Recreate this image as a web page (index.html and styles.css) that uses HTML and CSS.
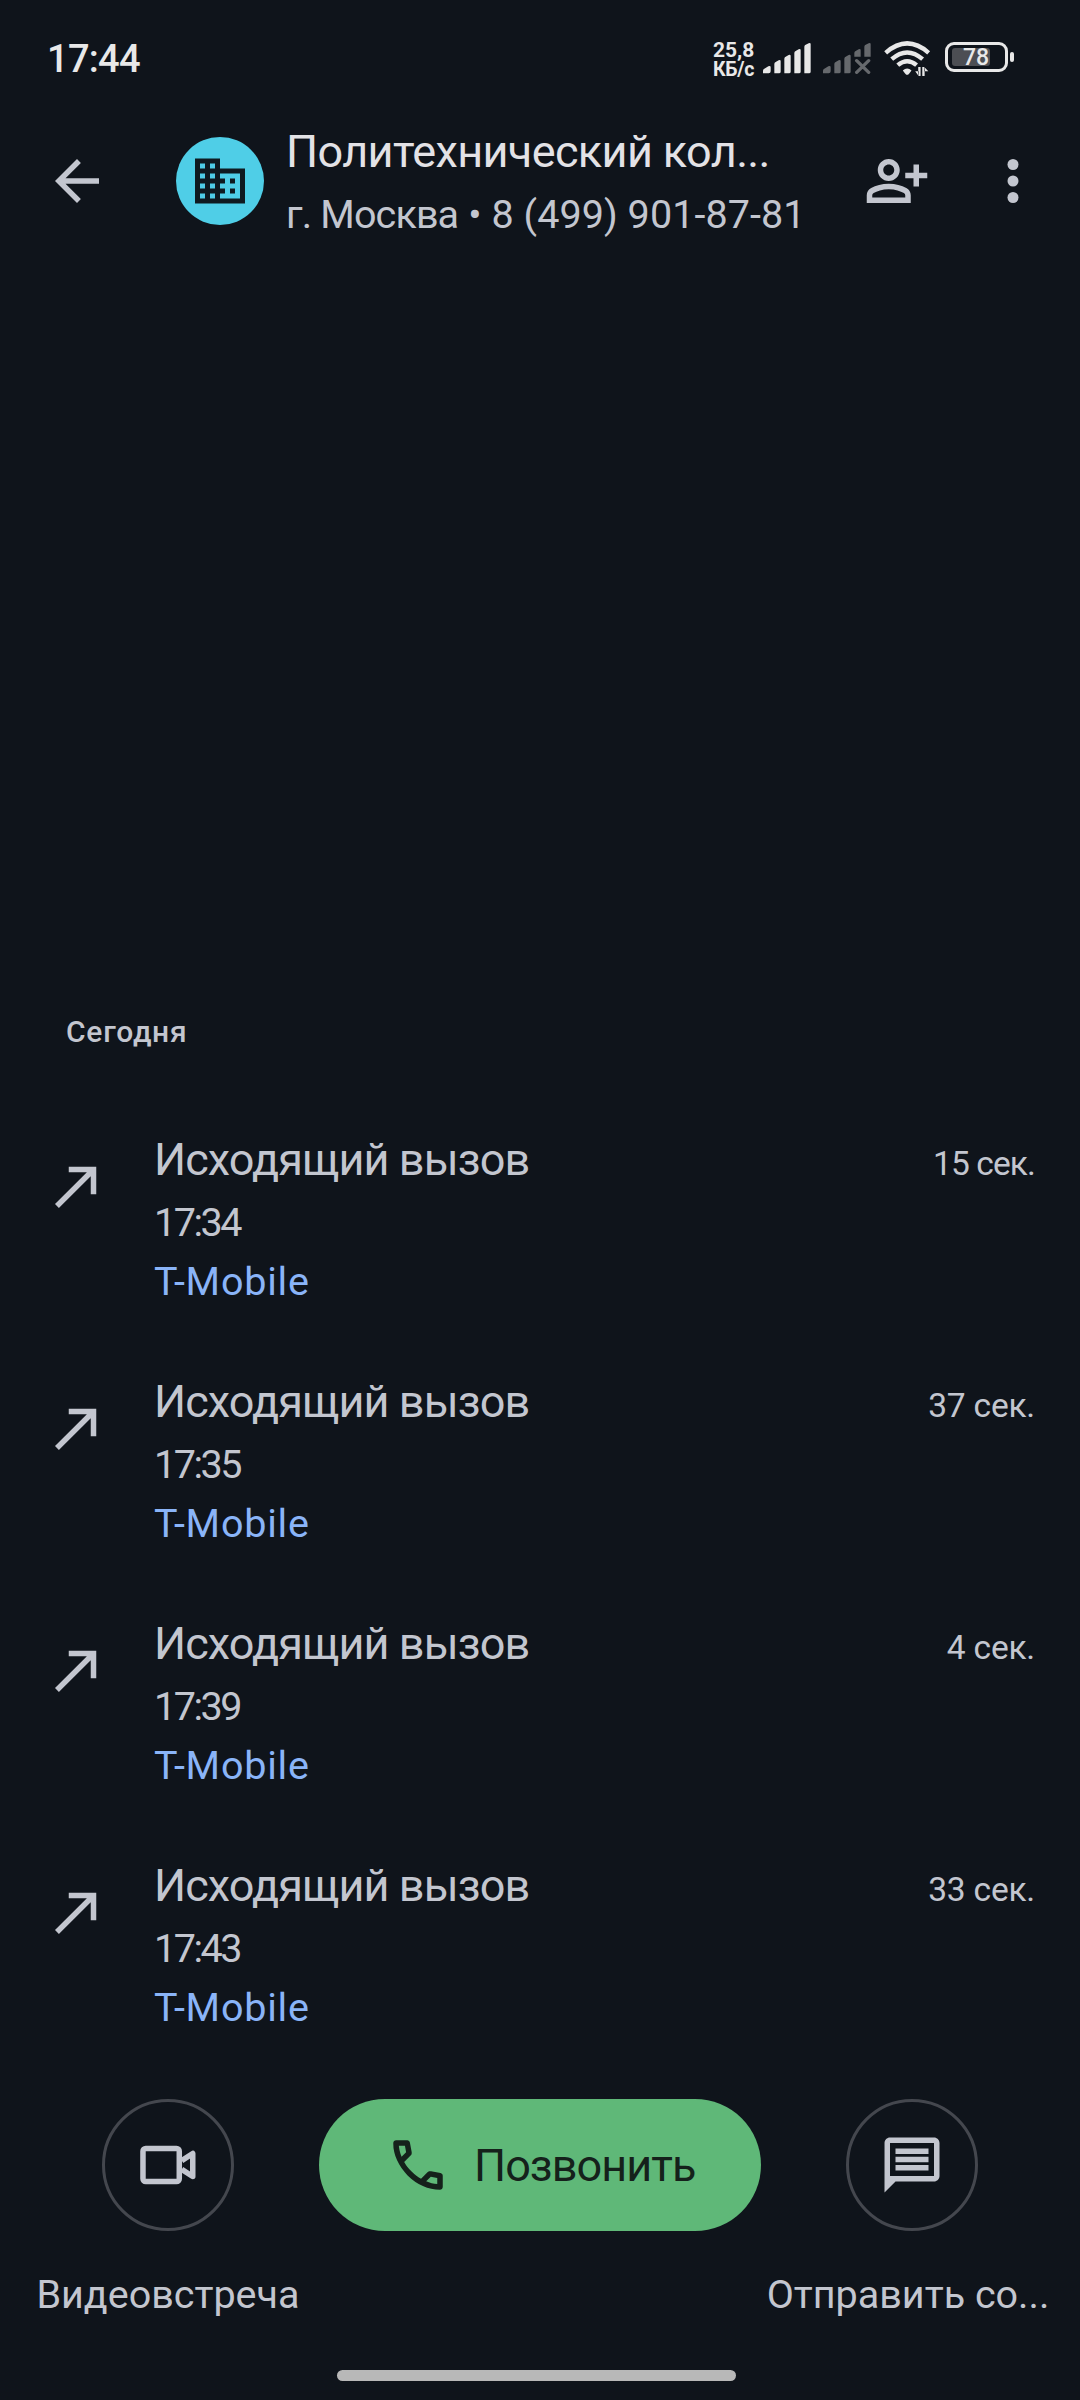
FILE: index.html
```html
<!DOCTYPE html>
<html lang="ru">
<head>
<meta charset="utf-8">
<title>История вызовов</title>
<link rel="stylesheet" href="styles.css">
</head>
<body>
<div class="screen">
  <div class="status">
    <span class="clock">17:44</span>
    <div class="indicators">
      <div class="speed"><span class="speed-value">25,8</span><span class="speed-unit">КБ/с</span></div>
      <svg class="signal" viewBox="0 0 144 96">
        <path d="M0 94V86Q0 82 4 80L16 73Q23 70 23 76V88Q23 94 17 94ZM34 94V66Q34 62 38 60L47 55Q53 52 53 58V89Q53 94 48 94ZM64 94V50Q64 46 68 44L77 39Q83 36 83 42V89Q83 94 78 94ZM94 94V33Q94 29 98 27L107 22Q113 19 113 25V89Q113 94 108 94ZM124 94V14Q124 10 128 8L137 4Q143 1 143 7V89Q143 94 138 94Z"/>
      </svg>
      <svg class="signal signal-off" viewBox="0 0 144 96">
        <path d="M0 94V86Q0 82 4 80L16 73Q23 70 23 76V88Q23 94 17 94ZM34 94V66Q34 62 38 60L47 55Q53 52 53 58V89Q53 94 48 94ZM64 94V50Q64 46 68 44L77 39Q83 36 83 42V89Q83 94 78 94ZM94 44V33Q94 29 98 27L107 22Q113 19 113 25V44ZM124 44V14Q124 10 128 8L137 4Q143 1 143 7V44Z"/>
        <path class="cross" d="M101 56L137 91M137 56L101 91"/>
      </svg>
      <svg class="wifi" viewBox="0 0 140 104">
        <g class="arcs">
          <path d="M5 35Q69 -21 133 35"/>
          <path d="M23 54Q69 14 115 54"/>
          <path d="M41 72Q69 48 97 72"/>
        </g>
        <path d="M56 88Q69 76 82 88L74 98Q69 103 64 98Z"/>
        <path d="M102 77V104H109V77ZM103 104L93 90H104ZM114 77V104H121V77ZM120 77L132 90H119Z"/>
      </svg>
      <div class="battery"><div class="cell"><div class="level"></div><span class="percent">78</span></div><i class="tip"></i></div>
    </div>
  </div>

  <header class="header">
    <svg class="icon back" viewBox="0 0 24 24"><path d="M20 11H7.83l5.59-5.59L12 4l-8 8 8 8 1.41-1.41L7.83 13H20v-2z"/></svg>
    <div class="avatar">
      <svg viewBox="0 0 24 24"><path d="M12 7V3H2v18h20V7H12zM6 19H4v-2h2v2zm0-4H4v-2h2v2zm0-4H4V9h2v2zm0-4H4V5h2v2zm4 12H8v-2h2v2zm0-4H8v-2h2v2zm0-4H8V9h2v2zm0-4H8V5h2v2zm10 12h-8v-2h2v-2h-2v-2h2v-2h-2V9h8v10zm-2-8h-2v2h2v-2zm0 4h-2v2h2v-2z"/></svg>
    </div>
    <div class="contact">
      <div class="name">Политехнический кол...</div>
      <div class="number"><span class="city">г. Москва</span> • 8 (499) 901-87-81</div>
    </div>
    <svg class="icon add" viewBox="0 0 24 24"><path d="M20 9V6h-2v3h-3v2h3v3h2v-3h3V9zM9 12c2.21 0 4-1.79 4-4s-1.79-4-4-4-4 1.79-4 4 1.79 4 4 4zm0-6c1.1 0 2 .9 2 2s-.9 2-2 2-2-.9-2-2 .9-2 2-2zM15.39 14.56C13.71 13.7 11.53 13 9 13s-4.71.7-6.39 1.56C1.61 15.07 1 16.1 1 17.22V20h16v-2.78c0-1.12-.61-2.15-1.61-2.66zM15 18H3v-.78c0-.38.2-.72.52-.88C4.71 15.73 6.63 15 9 15s4.29.73 5.48 1.34c.32.16.52.5.52.88V18z"/></svg>
    <svg class="icon more" viewBox="0 0 24 24"><circle cx="12" cy="6" r="2"/><circle cx="12" cy="12" r="2"/><circle cx="12" cy="18" r="2"/></svg>
  </header>

  <main class="history">
    <h2 class="day">Сегодня</h2>
    <div class="call">
      <svg class="icon" viewBox="0 0 24 24"><path d="M9 5v2h6.59L4 18.59 5.41 20 17 8.41V15h2V5z"/></svg>
      <div class="details"><div class="kind">Исходящий вызов</div><div class="time">17:34</div><div class="sim">T-Mobile</div></div>
      <span class="duration tight">15 сек.</span>
    </div>
    <div class="call">
      <svg class="icon" viewBox="0 0 24 24"><path d="M9 5v2h6.59L4 18.59 5.41 20 17 8.41V15h2V5z"/></svg>
      <div class="details"><div class="kind">Исходящий вызов</div><div class="time">17:35</div><div class="sim">T-Mobile</div></div>
      <span class="duration">37 сек.</span>
    </div>
    <div class="call">
      <svg class="icon" viewBox="0 0 24 24"><path d="M9 5v2h6.59L4 18.59 5.41 20 17 8.41V15h2V5z"/></svg>
      <div class="details"><div class="kind">Исходящий вызов</div><div class="time">17:39</div><div class="sim">T-Mobile</div></div>
      <span class="duration">4 сек.</span>
    </div>
    <div class="call">
      <svg class="icon" viewBox="0 0 24 24"><path d="M9 5v2h6.59L4 18.59 5.41 20 17 8.41V15h2V5z"/></svg>
      <div class="details"><div class="kind">Исходящий вызов</div><div class="time">17:43</div><div class="sim">T-Mobile</div></div>
      <span class="duration">33 сек.</span>
    </div>
  </main>

  <footer class="actions">
    <div class="action">
      <div class="round"><svg class="icon" viewBox="0 0 24 24"><g class="outline"><rect x="2.9" y="6" width="13.2" height="12" rx="1"/><path d="M17 10.4L21 7.8V16.2L17 13.6"/></g></svg></div>
      <span class="label">Видеовстреча</span>
    </div>
    <div class="dial">
      <svg class="icon" viewBox="0 0 24 24"><path d="M19.95 21q-3.125 0-6.175-1.363T8.225 15.775 4.363 10.225 3 4.05q0-.45.3-.75T4.05 3H8.1q.35 0 .625.238T9.05 3.8l.65 3.5q.05.4-.025.675T9.4 8.45L6.975 10.9q.5.925 1.187 1.787t1.513 1.663q.775.775 1.625 1.438T13.1 17l2.35-2.35q.225-.225.588-.338t.712-.062l3.45.7q.35.1.575.363T21 15.9v4.05q0 .45-.3.75t-.75.3ZM6.025 9l1.65-1.65L7.25 5H5.025q.125 1.025.35 2.025T6.025 9Zm8.95 8.95q.975.425 1.988.675T19 18.95v-2.2l-2.35-.475Z"/></svg>
      <span class="dial-text">Позвонить</span>
    </div>
    <div class="action">
      <div class="round"><svg class="icon" viewBox="0 0 24 24"><path d="M4 4h16v12H4V4m0-2c-1.1 0-1.99.9-1.99 2L2 22l4-4h14c1.1 0 2-.9 2-2V4c0-1.1-.9-2-2-2H4zm2 10h12v2H6v-2zm0-3h12v2H6V9zm0-3h12v2H6V6z"/></svg></div>
      <span class="label message">Отправить со...</span>
    </div>
  </footer>
  <div class="home"></div>
</div>
</body>
</html>
```
FILE: styles.css
```css
* { box-sizing: border-box; }
body { margin: 0; background: #0f141b; font-family: Roboto, "Noto Sans", sans-serif; color: #c3c6cf; }
svg { display: block; flex: none; }
.screen { width: 1080px; height: 2400px; display: flex; flex-direction: column; white-space: nowrap; overflow: hidden; }
.icon { width: 66px; height: 66px; fill: #c3c6cf; }

.status { height: 115px; display: flex; justify-content: space-between; color: #e8e8e8; padding: 0 66px 0 47px; }
.clock { font-size: 38px; font-weight: 500; line-height: 50px; padding-top: 34px; letter-spacing: -0.7px; }
.indicators { display: flex; align-items: flex-start; }
.speed { width: 50px; padding-top: 39px; font-weight: 700; display: flex; flex-direction: column; }
.speed-value { font-size: 21px; line-height: 22px; }
.speed-unit { font-size: 19.5px; line-height: 17px; letter-spacing: -0.3px; }
.signal { width: 48px; height: 32px; margin-top: 42px; fill: #e8e8e8; }
.signal-off { margin-left: 12px; fill: #66696d; }
.cross { stroke: #66696d; stroke-width: 10; stroke-linecap: round; }
.wifi { width: 47px; height: 35px; margin: 41px 14px 0 13px; fill: #e8e8e8; }
.arcs { fill: none; stroke: #e8e8e8; stroke-width: 13; }
.battery { display: flex; align-items: center; margin-top: 42px; gap: 2px; }
.cell { width: 63px; height: 30px; border: 3px solid #e8e8e8; border-radius: 9px; padding: 3px 4px; display: grid; }
.level { grid-area: 1 / 1; width: 38px; height: 18px; border-radius: 3px; background: #4c4e53; }
.percent { grid-area: 1 / 1; font-size: 23px; font-weight: 500; line-height: 20px; padding-left: 11px; }
.tip { width: 4px; height: 10px; background: #e8e8e8; border-radius: 2px; }

.header { height: 132px; display: flex; align-items: center; padding-left: 44px; }
.avatar { width: 88px; height: 88px; border-radius: 50%; background: #4fcee7; margin-left: 66px; display: flex; align-items: center; justify-content: center; }
.avatar svg { width: 60px; height: 60px; fill: #0f1a20; }
.contact { align-self: flex-start; width: 577px; padding: 7px 0 0 22px; }
.name { font-size: 45px; line-height: 60px; color: #e3e2e6; letter-spacing: -0.62px; }
.number { font-size: 39.5px; line-height: 56px; margin-top: 5px; letter-spacing: 0.07px; }
.city { letter-spacing: -0.85px; }
.add { margin-left: 23px; }
.more { margin-left: 50px; }

.history { padding-top: 765px; height: 1838px; }
.day { margin: 0 0 65px 66px; font-size: 30px; font-weight: 500; line-height: 40px; letter-spacing: 0.75px; }
.call { height: 242px; display: flex; align-items: flex-start; padding: 0 45px 0 44px; }
.call .icon { margin-top: 36px; }
.details { flex: 1; padding: 13px 0 0 44px; }
.kind { font-size: 45px; line-height: 60px; letter-spacing: -0.9px; }
.time, .sim { font-size: 39.5px; line-height: 56px; }
.time { margin-top: 5px; letter-spacing: -2.5px; }
.sim { margin-top: 3px; color: #8ab4f8; letter-spacing: 0.8px; }
.duration { font-size: 33.5px; line-height: 60px; padding-top: 17px; letter-spacing: -0.2px; }
.tight { letter-spacing: -0.9px; }

.actions { display: grid; grid-template-columns: 336px minmax(0, 1fr) 336px; padding-top: 14px; height: 285px; }
.action { display: flex; flex-direction: column; align-items: center; }
.round { width: 132px; height: 132px; border: 3px solid #44474e; border-radius: 50%; display: flex; align-items: center; justify-content: center; }
.outline { fill: none; stroke: #c3c6cf; stroke-width: 2; stroke-linejoin: round; }
.label { font-size: 39.5px; line-height: 56px; margin-top: 36px; }
.message { margin-right: 8px; }
.dial { justify-self: center; width: 442px; height: 132px; border-radius: 66px; background: #5fb878; display: flex; align-items: center; padding-left: 66px; }
.dial .icon { fill: #15211b; }
.dial-text { font-size: 45px; line-height: 60px; margin: 2px 0 0 23px; color: #15211b; letter-spacing: -0.95px; }
.home { width: 399px; height: 11px; border-radius: 6px; background: #b8b8b8; margin: 0 0 0 337px; }
```
